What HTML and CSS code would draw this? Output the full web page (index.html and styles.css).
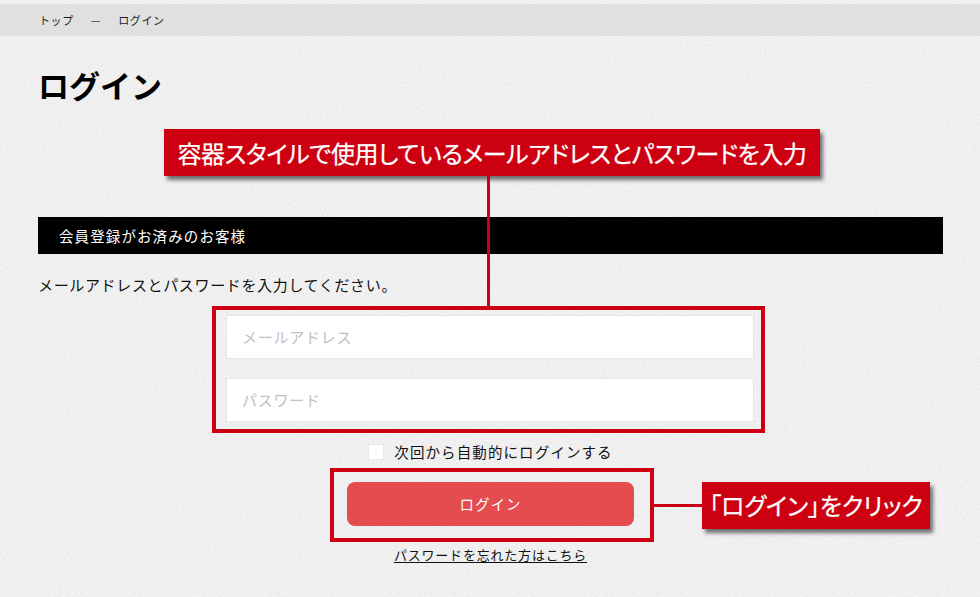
FILE: index.html
```html
<!DOCTYPE html>
<html lang="ja">
<head>
<meta charset="utf-8">
<title>ログイン</title>
<link rel="stylesheet" href="styles.css">
</head>
<body>
<svg class="grain" width="980" height="597" aria-hidden="true">
  <filter id="paper"><feTurbulence type="fractalNoise" baseFrequency="0.55" numOctaves="2" seed="4"/><feColorMatrix type="matrix" values="0 0 0 0 1  0 0 0 0 1  0 0 0 0 1  1.2 0 0 0 -0.48"/></filter>
  <rect width="980" height="597" filter="url(#paper)"/>
</svg>
<nav class="crumbs"><span>トップ</span><span class="sep">—</span><span>ログイン</span></nav>
<main class="page">
  <h1 class="title">ログイン</h1>
  <h2 class="band">会員登録がお済みのお客様</h2>
  <p class="lead">メールアドレスとパスワードを入力してください。</p>
  <form class="form">
    <div class="fields">
      <div class="field">メールアドレス</div>
      <div class="field">パスワード</div>
    </div>
    <label class="remember"><span class="check"></span><span>次回から自動的にログインする</span></label>
    <div class="submit">ログイン</div>
    <a class="forgot" href="#">パスワードを忘れた方はこちら</a>
  </form>
</main>
<div class="note note-top">容器スタイルで使用しているメールアドレスとパスワードを入力</div>
<div class="line line-v"></div>
<div class="frame frame-fields"></div>
<div class="frame frame-button"></div>
<div class="line line-h"></div>
<div class="note note-side">「ログイン」をクリック</div>
</body>
</html>
```
FILE: styles.css
```css
* { box-sizing: border-box; }
html, body { margin: 0; height: 597px; overflow: hidden; }
body {
  position: relative;
  padding-top: 4px;
  font-family: "Noto Sans CJK JP", "Noto Sans", sans-serif;
  color: #111;
  background-color: #ededed;
}
.grain { position: absolute; left: 0; top: 0; z-index: -1; }
.crumbs {
  height: 32px;
  padding-left: 39px;
  display: flex;
  align-items: center;
  gap: 17px;
  background: #e0e0e0;
  font-size: 11px;
  letter-spacing: .6px;
  color: #1a1a1a;
}
.sep { color: #444; }
.page { padding: 0 37px 0 38px; }
.title {
  margin: 28px 0 0;
  height: 42px;
  line-height: 42px;
  font-size: 31px;
  font-weight: 700;
  color: #000;
}
.band {
  margin: 111px 0 0;
  height: 37px;
  line-height: 37px;
  padding-left: 21px;
  background: #000;
  color: #fff;
  font-size: 14.5px;
  font-weight: 400;
  letter-spacing: 1.1px;
}
.lead {
  margin: 20px 0 0;
  height: 22px;
  line-height: 22px;
  font-size: 15px;
  letter-spacing: .65px;
}
.form {
  display: flex;
  flex-direction: column;
  align-items: center;
}
.fields {
  margin: 19px 0 0 -1px;
  width: 528px;
  display: flex;
  flex-direction: column;
  gap: 19px;
}
.field {
  height: 44px;
  line-height: 42px;
  padding-left: 15px;
  background: #fff;
  border: 1px solid #e6e6e6;
  color: #bfbfbf;
  font-size: 15px;
  letter-spacing: .75px;
}
.remember {
  margin-top: 21px;
  height: 17px;
  display: flex;
  align-items: center;
  gap: 10px;
  font-size: 14.5px;
  letter-spacing: 1.1px;
  white-space: nowrap;
}
.check {
  width: 16px;
  height: 16px;
  background: #fff;
  border: 1px solid #e8e8e8;
}
.submit {
  margin-top: 22px;
  width: 287px;
  height: 44px;
  line-height: 44px;
  text-align: center;
  background: #e44c50;
  border-radius: 8px;
  color: #fff;
  font-size: 14.5px;
  letter-spacing: 1px;
}
.forgot {
  margin-top: 20px;
  line-height: 18px;
  font-size: 13px;
  letter-spacing: .8px;
  color: #111;
  text-decoration: underline;
  text-underline-offset: 2px;
}
.note {
  position: absolute;
  display: flex;
  align-items: center;
  justify-content: center;
  background: #cc0011;
  color: #fff;
  font-weight: 400;
  -webkit-text-stroke: .25px #fff;
  white-space: nowrap;
  box-shadow: 3px 4px 4px rgba(40,40,40,.65);
  font-feature-settings: "palt";
}
.note-top { left: 164px; top: 129px; width: 656px; height: 47px; padding-bottom: 1px; font-size: 24px; letter-spacing: -.4px; }
.note-side { left: 702px; top: 482px; width: 228px; height: 47px; padding-bottom: 3px; font-size: 24px; letter-spacing: -.2px; }
.line { position: absolute; background: #cc0011; }
.line-v { left: 487px; top: 176px; width: 3px; height: 131px; }
.line-h { left: 653px; top: 504px; width: 49px; height: 3px; }
.frame { position: absolute; border: 4px solid #cc0011; }
.frame-fields { left: 212px; top: 306px; width: 553px; height: 127px; }
.frame-button { left: 330px; top: 468px; width: 324px; height: 74px; }
```
